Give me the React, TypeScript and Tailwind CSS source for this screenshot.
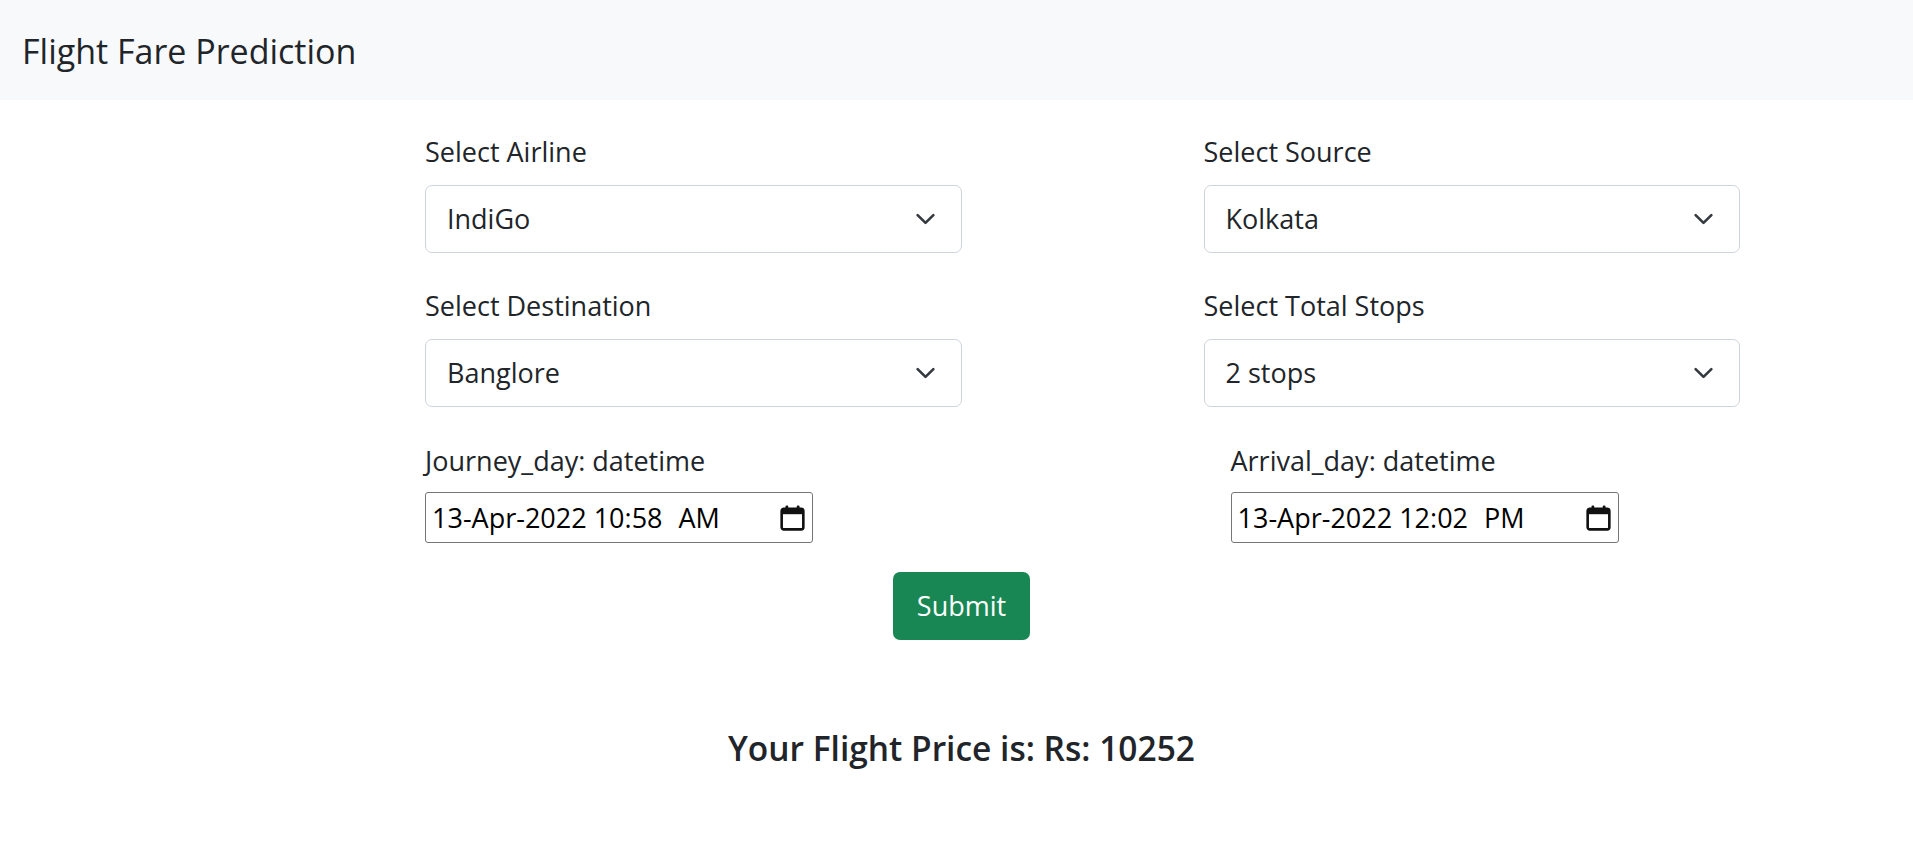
interface SelectFieldProps {
  label: string
  value: string
  options: string[]
}

function Chevron() {
  return (
    <svg
      className="pointer-events-none absolute right-[26px] top-1/2 -translate-y-1/2"
      width="21"
      height="21"
      viewBox="0 0 16 16"
      fill="none"
    >
      <path d="m2 5 6 6 6-6" stroke="#343a40" strokeWidth="2" strokeLinecap="round" strokeLinejoin="round" />
    </svg>
  )
}

function SelectField({ label, value, options }: SelectFieldProps) {
  return (
    <div className="flex flex-col">
      <label className="text-[27px] leading-[42px] mb-[12px]">{label}</label>
      <div className="relative">
        <select
          defaultValue={value}
          className="w-full h-[68px] appearance-none rounded-[7px] border border-[#ced4da] bg-white pl-[21px] pr-[60px] text-[27px] text-[#212529] outline-none"
        >
          {options.map((o) => (
            <option key={o}>{o}</option>
          ))}
        </select>
        <Chevron />
      </div>
    </div>
  )
}

function CalendarIcon() {
  return (
    <svg width="25" height="26" viewBox="0 0 23 24" fill="none">
      <rect x="1.5" y="3.5" width="20" height="19" rx="2" stroke="#111" strokeWidth="2.4" />
      <rect x="1.5" y="3.5" width="20" height="5" fill="#111" />
      <rect x="5" y="0.5" width="2.6" height="4" rx="1" fill="#111" />
      <rect x="15.4" y="0.5" width="2.6" height="4" rx="1" fill="#111" />
    </svg>
  )
}

function DateField({ label, date, time, ampm }: { label: string; date: string; time: string; ampm: string }) {
  return (
    <div className="flex flex-col">
      <label className="text-[27px] leading-[42px] mb-[10px]">{label}</label>
      <div className="flex h-[51px] w-[388px] items-center justify-between rounded-[3px] border border-[#767676] bg-white pl-[6px] pr-[7px] text-black">
        <span className="flex gap-[16px] text-[27px] leading-none">
          <span>
            {date} {time}
          </span>
          <span>{ampm}</span>
        </span>
        <CalendarIcon />
      </div>
    </div>
  )
}

export default function App() {
  const airlines = ['IndiGo', 'Air India', 'Jet Airways', 'SpiceJet', 'GoAir', 'Vistara']
  const sources = ['Kolkata', 'Delhi', 'Banglore', 'Mumbai', 'Chennai']
  const destinations = ['Banglore', 'Cochin', 'Delhi', 'New Delhi', 'Hyderabad', 'Kolkata']
  const stops = ['non-stop', '1 stop', '2 stops', '3 stops', '4 stops']

  return (
    <div className="min-h-screen bg-white font-['Open_Sans',sans-serif] text-[#212529]">
      <nav className="flex h-[100px] items-center bg-[#f8f9fa] px-[22px] pt-[1px]">
        <span className="text-[34px] leading-none">Flight Fare Prediction</span>
      </nav>

      <form className="pt-[31px]" onSubmit={(e) => e.preventDefault()}>
        <div className="ml-[425px] grid w-[1315px] grid-cols-2 gap-x-[242px] gap-y-[32px]">
          <SelectField label="Select Airline" value="IndiGo" options={airlines} />
          <SelectField label="Select Source" value="Kolkata" options={sources} />
          <SelectField label="Select Destination" value="Banglore" options={destinations} />
          <SelectField label="Select Total Stops" value="2 stops" options={stops} />
        </div>

        <div className="ml-[425px] mt-[33px] grid w-[1315px] grid-cols-2 gap-x-[242px]">
          <DateField label="Journey_day: datetime" date="13-Apr-2022" time="10:58" ampm="AM" />
          <div className="pl-[27px]">
            <DateField label="Arrival_day: datetime" date="13-Apr-2022" time="12:02" ampm="PM" />
          </div>
        </div>

        <div className="mt-[29px] flex justify-center pl-[10px]">
          <button
            type="submit"
            className="h-[68px] w-[137px] rounded-[7px] bg-[#198754] text-[27px] text-white"
          >
            Submit
          </button>
        </div>
      </form>

      <div className="mt-[87px] pl-[10px] text-center">
        <h5 className="text-[33.5px] font-semibold leading-[42px]">Your Flight Price is: Rs: 10252</h5>
      </div>
    </div>
  )
}
